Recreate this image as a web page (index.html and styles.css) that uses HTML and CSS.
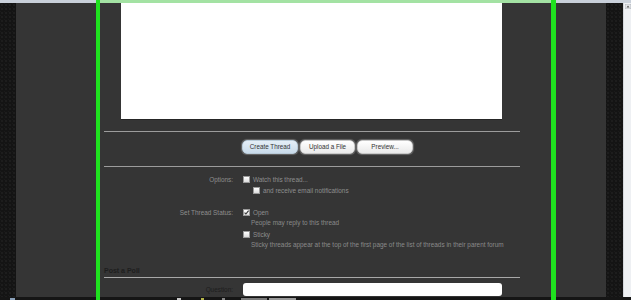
FILE: index.html
```html
<!DOCTYPE html>
<html>
<head>
<meta charset="utf-8">
<link rel="stylesheet" href="styles.css">
</head>
<body>
<div class="screen">
  <div class="topbar"></div>
  <div class="main">
    <div class="texture"></div>
    <div class="panel">
      <div class="form">
        <div class="editor"></div>
        <div class="rule rule-a"></div>
        <div class="buttons">
          <button class="btn primary">Create Thread</button>
          <button class="btn">Upload a File</button>
          <button class="btn">Preview...</button>
        </div>
        <div class="rule rule-b"></div>

        <div class="row row-options">
          <div class="label">Options:</div>
          <div class="ctrl">
            <div class="check"><span class="box"></span><span>Watch this thread...</span></div>
            <div class="check indent"><span class="box"></span><span>and receive email notifications</span></div>
          </div>
        </div>

        <div class="row row-status">
          <div class="label">Set Thread Status:</div>
          <div class="ctrl">
            <div class="check"><span class="box checked"><svg viewBox="0 0 7 7" width="7" height="7"><path d="M1.6 3.6 L2.9 5 L5.6 1.6" fill="none" stroke="#333" stroke-width="1.1"/></svg></span><span>Open</span></div>
            <div class="hint">People may reply to this thread</div>
            <div class="check sticky"><span class="box"></span><span>Sticky</span></div>
            <div class="hint">Sticky threads appear at the top of the first page of the list of threads in their parent forum</div>
          </div>
        </div>

        <div class="poll-title">Post a Poll</div>
        <div class="rule rule-c"></div>
        <div class="row row-question">
          <div class="label dark">Question:</div>
          <div class="ctrl"><div class="input"></div></div>
        </div>
      </div>
    </div>
    <div class="texture texture-right"></div>
    <div class="scrollbar">
      <svg class="arrow" viewBox="0 0 6 5" width="6" height="5"><rect x="0" y="0" width="6" height="5" fill="#e4e6ea" stroke="#9aa0a8" stroke-width="0.6"/><path d="M1.5 3.4 L3 1.6 L4.5 3.4 Z" fill="#555"/></svg>
    </div>
  </div>
  <div class="taskbar">
    <span class="tb tb1"></span>
    <span class="tb tb2"></span>
    <span class="tb tb3"></span>
    <span class="tb tb4"></span>
    <span class="tb tb5"></span>
    <span class="tb tb6"></span>
  </div>
  <div class="highlight"></div>
</div>
</body>
</html>
```

FILE: styles.css
```css
* { box-sizing: border-box; }
html, body { margin: 0; padding: 0; }
body {
  width: 631px;
  height: 300px;
  overflow: hidden;
  background: #111;
  font-family: "Liberation Sans", Arial, sans-serif;
}
.screen {
  position: relative;
  width: 631px;
  height: 300px;
  display: flex;
  flex-direction: column;
}
.topbar {
  height: 3px;
  background: #c9d0da;
  flex: none;
}
.main {
  display: flex;
  height: 294px;
  flex: none;
}
.texture {
  width: 16px;
  flex: none;
  background-color: #141414;
  background-image:
    radial-gradient(circle at 2px 2px, #1d1d1d 0.9px, transparent 1.3px),
    radial-gradient(circle at 0px 0px, #1a1a1a 0.9px, transparent 1.3px);
  background-size: 4px 4px, 4px 4px;
}
.texture-right { width: 17px; }
.panel {
  width: 590px;
  flex: none;
  background: #353535;
  overflow: hidden;
}
.form {
  margin-left: 88px;
  width: 416px;
  display: flex;
  flex-direction: column;
}
.editor {
  margin-left: 17px;
  width: 381px;
  height: 117px;
  background: #fff;
  border-bottom: 1px solid #262626;
}
.rule {
  height: 1px;
  background: #9c9c9c;
}
.rule-a { margin-top: 11px; }
.buttons {
  margin-top: 8px;
  margin-left: 138px;
  display: flex;
  gap: 2px;
}
.btn {
  height: 14px;
  width: 56px;
  padding: 0;
  border: 1px solid #c8c8c8;
  border-radius: 5px;
  background: linear-gradient(#ffffff, #e9e9e9);
  box-shadow: 0 0 1px 1px rgba(255,255,255,0.25);
  font-family: "Liberation Sans", Arial, sans-serif;
  font-size: 6.3px;
  color: #333;
  line-height: 12px;
}
.btn + .btn { width: 55px; }
.btn:last-child { width: 56px; }
.btn.primary {
  background: linear-gradient(#e4eef7, #c9dbea);
  border-color: #b9cbd9;
}
.rule-b { margin-top: 12px; }

.row {
  display: grid;
  grid-template-columns: 129px 259px;
  column-gap: 10px;
  font-size: 6.4px;
  color: #8e8e8e;
  line-height: 9px;
}
.label { text-align: right; }
.label.dark { color: #1d1d1d; }
.row-options { margin-top: 8px; }
.row-status { margin-top: 13px; }
.check {
  display: flex;
  align-items: center;
  gap: 3px;
  height: 9px;
}
.check.indent { margin-top: 2px; margin-left: 10px; }
.check.sticky { margin-top: 3px; }
.box {
  width: 7px;
  height: 7px;
  flex: none;
  background: linear-gradient(#ffffff, #dcdcdc);
  border: 1px solid #9a9a9a;
  display: block;
  position: relative;
}
.box.checked svg { position: absolute; left: -1px; top: -1px; }
.hint {
  margin-left: 8px;
  margin-top: 1px;
  color: #8a8a8a;
  white-space: nowrap;
}
.poll-title {
  margin-top: 17px;
  font-size: 7px;
  font-weight: bold;
  color: #1e1e1e;
  line-height: 10px;
}
.rule-c { margin-top: 1px; background: #a8a8a8; }
.row-question { margin-top: 5px; align-items: center; }
.input {
  height: 13px;
  background: #fff;
  border-radius: 3px;
  width: 259px;
}
.scrollbar {
  width: 8px;
  flex: none;
  background: #eef0f3;
  border-left: 1px solid #d4d7dc;
  display: flex;
  flex-direction: column;
  align-items: center;
  padding-top: 1px;
}
.taskbar {
  height: 3px;
  flex: none;
  background: #151515;
  position: relative;
  display: flex;
  align-items: flex-end;
}
.tb { display: block; height: 2px; background: #777; margin-right: 0; }
.tb1 { width: 5px; margin-left: 10px; background: #8aa0b8; }
.tb2 { width: 4px; margin-left: 162px; background: #c9c9c9; }
.tb3 { width: 3px; margin-left: 20px; background: #b5b54a; }
.tb4 { width: 3px; margin-left: 18px; background: #888; }
.tb5 { width: 26px; margin-left: 16px; background: #7b7b7b; }
.tb6 { width: 27px; margin-left: 2px; background: #9a9a9a; }
.highlight {
  position: absolute;
  left: 96px;
  top: 0;
  width: 460px;
  height: 300px;
  border-left: 4px solid #1fe21f;
  border-right: 5px solid #1fe21f;
  background: linear-gradient(to bottom, #a3e2a3 0, #a3e2a3 3px, transparent 3px);
  pointer-events: none;
}
```
